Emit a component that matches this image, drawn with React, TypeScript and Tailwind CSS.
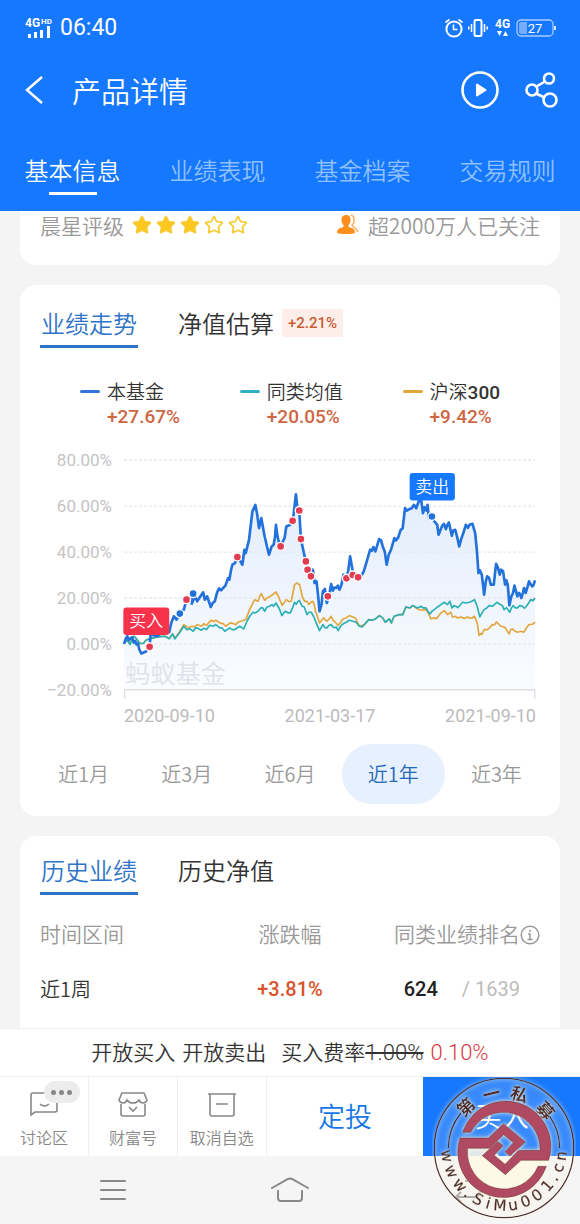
import { Star } from 'lucide-react';

const tabs = ['基本信息', '业绩表现', '基金档案', '交易规则'];

const legend = [
  { name: '本基金', value: '+27.67%', color: 'bg-[#2f74d8]' },
  { name: '同类均值', value: '+20.05%', color: 'bg-[#2fb0c9]' },
  { name: '沪深', num: '300', value: '+9.42%', color: 'bg-[#e0a63a]' },
];

const axis = ['80.00%', '60.00%', '40.00%', '20.00%', '0.00%', '−20.00%'];
const ranges = ['近1月', '近3月', '近6月', '近1年', '近3年'];

// Chart series, x 0..1236 and y 30..720
const fund =
  '0,583 5,568 10,560 15,572 20,566 24,563 30,580 34,574 38,585 42,582 46,600 52,612 66,606 77,592 80,555 100,560 120,545 136,548 142,520 150,500 158,510 168,490 180,480 188,450 200,443 208,432 204,462 213,440 220,455 230,440 238,428 243,450 250,440 261,472 267,460 273,455 280,428 286,416 292,422 298,415 305,408 313,385 317,390 322,360 326,345 334,340 341,322 350,335 356,345 362,300 366,310 376,270 386,185 395,165 400,190 406,235 413,205 423,260 430,290 436,315 444,290 450,285 454,262 457,225 462,262 468,285 476,278 483,265 488,230 500,225 508,210 511,185 517,133 522,180 527,182 532,268 541,310 547,335 552,360 562,380 568,360 573,400 579,395 584,440 588,485 594,465 598,425 604,418 610,460 617,435 623,403 628,423 632,414 638,415 643,408 648,420 654,405 660,375 669,385 674,365 680,320 688,365 696,372 704,383 714,378 721,365 730,335 740,300 745,303 750,292 756,305 767,268 773,272 778,290 784,305 790,345 796,315 803,300 813,265 818,272 825,262 832,240 838,236 845,175 851,182 858,178 865,175 872,165 879,175 886,155 892,140 895,160 899,190 904,172 909,182 913,165 917,205 926,205 936,218 942,225 946,255 952,240 957,228 962,222 968,238 973,224 977,218 986,258 990,242 996,240 1002,262 1008,290 1014,268 1022,245 1028,225 1034,234 1040,224 1048,222 1056,250 1061,300 1066,370 1070,362 1076,375 1083,435 1088,395 1092,380 1098,385 1103,405 1112,405 1119,342 1124,352 1130,375 1134,360 1140,365 1146,405 1150,392 1154,405 1159,467 1165,440 1170,430 1174,408 1179,425 1183,440 1188,430 1192,436 1195,445 1200,428 1203,415 1208,430 1214,410 1218,395 1223,404 1228,410 1232,405 1236,392';

const peers =
  '0,583 8,570 18,585 24,572 30,560 38,568 48,582 58,582 66,572 76,568 100,562 123,560 136,568 146,553 153,568 168,548 180,530 188,540 198,538 208,545 215,535 220,535 233,542 240,536 248,540 258,527 268,530 276,525 288,535 295,535 303,545 318,535 325,540 333,540 348,530 360,538 370,515 378,500 388,488 393,490 398,488 403,485 411,475 417,475 423,485 430,472 438,470 445,465 450,470 457,460 466,475 475,498 482,488 486,485 494,490 500,490 507,475 513,458 518,464 523,455 527,452 536,470 542,472 550,495 556,488 563,488 570,500 578,520 588,543 598,525 604,534 610,535 616,528 623,525 628,532 633,535 638,532 644,543 650,532 656,525 668,518 678,512 688,515 698,518 708,530 716,532 723,525 736,510 746,512 756,508 768,498 778,505 786,518 798,508 804,520 812,500 828,495 838,495 848,472 860,475 868,468 883,475 893,470 900,475 908,475 914,485 920,493 928,483 933,480 943,472 953,465 963,458 973,465 980,455 986,475 992,468 998,470 1004,474 1008,470 1018,458 1028,460 1038,458 1046,455 1054,450 1062,470 1070,502 1077,490 1083,480 1090,476 1098,468 1108,470 1121,458 1130,464 1138,468 1143,480 1150,474 1160,488 1165,475 1170,468 1177,475 1183,475 1190,468 1198,470 1204,476 1210,470 1217,460 1223,450 1230,453 1236,445';

const index =
  '0,583 8,568 18,583 24,570 30,560 38,568 48,582 58,582 66,572 76,568 100,562 123,560 136,566 146,553 153,566 168,545 180,525 193,535 203,530 212,532 220,525 233,530 240,522 248,528 256,518 263,512 270,516 276,512 288,520 298,522 306,530 316,522 323,520 336,525 345,516 353,515 366,510 378,480 385,465 393,450 403,455 408,440 413,432 418,442 423,452 430,445 440,440 446,436 457,427 464,440 468,450 476,467 488,450 496,456 503,455 508,430 513,405 520,400 528,405 536,440 543,455 550,455 556,465 562,458 568,455 572,465 576,485 588,520 600,505 610,515 617,508 623,500 628,512 633,515 644,528 652,518 658,508 668,505 678,498 688,502 696,505 708,530 723,525 736,510 746,512 756,508 768,498 778,505 786,518 798,508 804,520 812,500 828,495 838,495 848,472 860,475 868,468 883,478 893,482 906,480 912,485 923,508 932,505 940,507 953,490 963,483 973,495 983,488 988,503 996,500 1003,505 1013,502 1023,507 1033,502 1038,505 1046,506 1054,500 1062,520 1068,558 1073,552 1076,555 1083,540 1093,540 1102,532 1108,525 1114,526 1120,517 1133,530 1143,532 1150,540 1158,553 1163,540 1168,538 1176,545 1183,548 1193,545 1203,548 1210,535 1218,525 1228,524 1236,518';

const buys = [[77, 592], [188, 450], [341, 322], [471, 290], [507, 213], [527, 182], [532, 268], [547, 335], [552, 360], [562, 380], [613, 440], [669, 386], [688, 376], [704, 383]];
const sells = [[168, 492], [208, 432], [926, 200]];

// Seal characters with their angle on the ring
const sealTop: [string, number][] = [['第', -43], ['一', -13], ['私', 16], ['募', 48]];
const sealUrl: [string, number][] = [
  ['w', 82], ['w', 66], ['w', 50], ['.', 39], ['S', 27], ['i', 16], ['M', 4],
  ['u', -9], ['0', -22], ['0', -35], ['1', -49], ['.', -59], ['c', -70], ['n', -82],
];

function StatusBar() {
  return (
    <div className="flex items-center justify-between px-6 pt-3 font-[Roboto,sans-serif]">
      <div className="flex items-center gap-2">
        <svg className="h-8 w-7" viewBox="0 -5 28 32" fill="#fff">
          <text x="1" y="10" fontSize="12" fontWeight="700">4G</text>
          <text x="17" y="7" fontSize="8" fontWeight="700">HD</text>
          <path d="M4 17h3v4H4zM10 15h3v6h-3zM16 13h3v8h-3zM23 9h3v12h-3z" />
        </svg>
        <span className="text-[23px] leading-8">06:40</span>
      </div>
      <div className="flex items-center gap-1">
        <svg className="h-5 w-5" viewBox="0 0 20 20" fill="none" stroke="#fff" strokeWidth="2">
          <circle cx="10" cy="11" r="7.6" />
          <path d="M9.500 6.500v5h4M1.500 4.500l4-3M18.500 4.500l-4-3" strokeWidth="1.600" />
        </svg>
        <svg className="h-5 w-5" viewBox="0 0 20 20" fill="none" stroke="#fff" strokeWidth="2">
          <rect x="6.500" y="2" width="7" height="16" rx="1.500" />
          <path d="M3.500 6v8M.800 8.500v3M16.500 6v8M19.200 8.500v3" strokeWidth="1.500" />
        </svg>
        <svg className="h-7 w-5" viewBox="0 -4 20 28" fill="#fff">
          <text x="3" y="10" fontSize="12" fontWeight="700">4G</text>
          <path d="M5 13h5l-2.500 5zM11 18h5l-2.500-5z" />
        </svg>
        <svg className="h-5 w-10" viewBox="0 0 40 20" fill="none">
          <rect x="1" y="2" width="36" height="16" rx="4" stroke="#a9cdff" strokeWidth="1.300" />
          <path d="M5 4h6v12H5a2 2 0 0 1-2-2V6a2 2 0 0 1 2-2z" fill="#74adff" />
          <path d="M39 8v4" stroke="#fff" strokeWidth="1.600" />
          <text x="19" y="15" textAnchor="middle" fontSize="13" fill="#fff">27</text>
        </svg>
      </div>
    </div>
  );
}

function Header() {
  return (
    <header className="shrink-0 bg-[#1677ff] pb-4 text-white">
      <StatusBar />
      <div className="flex h-20 items-center px-6 pt-3">
        <button aria-label="返回" className="mr-7">
          <svg className="h-8 w-5" viewBox="0 0 20 32" fill="none" stroke="#fff" strokeWidth="2.500">
            <path d="M18 3L3 16l15 13" />
          </svg>
        </button>
        <h1 className="flex-1 text-[29px] leading-10 font-[350]">产品详情</h1>
        <button aria-label="播放" className="mr-6">
          <svg className="size-10" viewBox="0 0 40 40" fill="none" stroke="#fff" strokeWidth="2.600">
            <circle cx="20" cy="20" r="17.500" />
            <path d="M17 14.500v11l8.500-5.500z" fill="#fff" strokeWidth="2" strokeLinejoin="round" />
          </svg>
        </button>
        <button aria-label="分享" className="-mr-1">
          <svg className="size-9" viewBox="0 0 36 36" fill="none" stroke="#fff" strokeWidth="2.600">
            <circle cx="8" cy="18" r="5.500" />
            <circle cx="25" cy="6.500" r="5" />
            <circle cx="26" cy="28" r="6.500" />
            <path d="M12.500 14.500L21 9.500M12 21.500l8.500 4" />
          </svg>
        </button>
      </div>
      <nav className="grid grid-cols-4 pt-7">
        {tabs.map((tab, i) => (
          <a
            key={tab}
            href="#"
            className={`flex flex-col items-center gap-1 text-2xl leading-9 font-[350] ${i === 0 ? '' : 'text-[#8fc0ff]'}`}
          >
            {tab}
            {i === 0 && <span className="h-[3px] w-12 bg-white" />}
          </a>
        ))}
      </nav>
    </header>
  );
}

function CardTabs({ active, other, badge }: { active: string; other: string; badge?: string }) {
  return (
    <div className="flex items-start px-5 text-2xl font-[350]">
      <button className="border-b-3 border-[#2f74c8] px-px pb-1 leading-9 text-[#2f74c8]">{active}</button>
      <button className="ml-10 leading-9 text-[#333]">{other}</button>
      {badge && (
        <span className="mt-1 ml-2 bg-[#fdeeea] px-1.5 font-[Roboto,sans-serif] text-[15px] leading-7 font-medium text-[#c65d35]">
          {badge}
        </span>
      )}
    </div>
  );
}

function Chart() {
  return (
    <div className="flex pr-4 pl-6 font-[Roboto,'Noto_Sans_CJK_SC',sans-serif] text-[17px] text-[#c4c4c4]">
      <ul className="w-17 shrink-0 text-right">
        {axis.map((label) => (
          <li key={label} className="h-[46px] leading-6">{label}</li>
        ))}
      </ul>
      <div className="ml-2 min-w-0 flex-1">
        <svg className="w-full" viewBox="-4 -12 425 255">
          <defs>
            <linearGradient id="area" x1="0" y1="0" x2="0" y2="1">
              <stop offset="0" stopColor="#e3edfc" />
              <stop offset="1" stopColor="#fafcff" />
            </linearGradient>
          </defs>
          <g transform="scale(.33333) translate(0 -30)" fill="none" strokeWidth="5" strokeLinejoin="round">
            <polygon points={`0,720 ${fund} 1236,720`} fill="url(#area)" />
            {[30, 169, 307, 445, 583].map((y) => (
              <path key={y} d={`M0 ${y}H1236`} stroke="#e6e8ec" strokeWidth="4" strokeDasharray="9 6" />
            ))}
            <text x="3" y="702" fontSize="76" fontWeight="350" fill="#dfe2e8">蚂蚁基金</text>
            <path d="M2 748V721H1235V748" stroke="#dddfe3" strokeWidth="4" />
            <polyline points={index} stroke="#e2a63f" />
            <polyline points={peers} stroke="#2bafb5" />
            <polyline points={fund} stroke="#2372dc" strokeWidth="8" />
            {buys.map(([x, y]) => (
              <circle key={`${x}-${y}`} cx={x} cy={y} r="12" fill="#e23c50" stroke="#fff" strokeWidth="4" />
            ))}
            {sells.map(([x, y]) => (
              <circle key={`${x}-${y}`} cx={x} cy={y} r="12" fill="#2372dc" stroke="#fff" strokeWidth="4" />
            ))}
            <rect x="-2" y="474" width="138" height="82" rx="9" fill="#f7324b" />
            <text x="67" y="533" textAnchor="middle" fontSize="51" fontWeight="350" fill="#fff">买入</text>
            <rect x="859" y="69" width="136" height="83" rx="9" fill="#1677ff" />
            <text x="927" y="129" textAnchor="middle" fontSize="51" fontWeight="350" fill="#fff">卖出</text>
          </g>
        </svg>
        <div className="flex justify-between pr-2 pl-1 text-lg leading-7 text-[#bbb]">
          <span>2020-09-10</span>
          <span>2021-03-17</span>
          <span>2021-09-10</span>
        </div>
      </div>
    </div>
  );
}

function Seal() {
  return (
    <svg className="pointer-events-none absolute right-1 bottom-1 size-[144px]" viewBox="65 49 432 432">
      <defs>
        <filter id="glow" x="-20%" y="-20%" width="140%" height="140%">
          <feDropShadow dx="0" dy="0" stdDeviation="6" floodColor="#fff6dc" floodOpacity="1" />
        </filter>
      </defs>
      <circle cx="281" cy="265" r="209" fill="#fff8e6" fillOpacity="0.15" />
      <path d="M149 262H236L281 300L325 302H414A134 134 0 0 1 149 262Z" fill="#fff8e8" fillOpacity="0.85" />
      <g filter="url(#glow)">
        <circle cx="281" cy="265" r="209" fill="none" stroke="#4a2e35" strokeWidth="4" />
        <path d="M114 265A167 167 0 0 1 152 160M448 265A167 167 0 0 0 418 170" fill="none" stroke="#4a2e35" strokeWidth="4" />
        <g fill="#4f2a2c" textAnchor="middle">
          {sealTop.map(([ch, a]) => (
            <text key={ch} x="281" y="117" fontSize="52" fontWeight="700" transform={`rotate(${a} 281 265)`}>{ch}</text>
          ))}
          {sealUrl.map(([ch, a], i) => (
            <text
              key={i}
              x="281"
              y="453"
              fontSize="46"
              fontWeight="400"
              fontFamily="DejaVu Sans"
              stroke="#4f2a2c"
              strokeWidth="1"
              transform={`rotate(${a} 281 265)`}
            >
              {ch}
            </text>
          ))}
        </g>
      </g>
      <g filter="url(#glow)" fill="#b04a62" stroke="#6f2f3d" strokeWidth="2">
        <path d="M157 218A134 134 0 0 1 415 302H332L285 345L216 288L262 245L278 258L252 287L284 314L325 272H389A110 110 0 0 0 181 218Z" />
        <path d="M408 320A134 134 0 0 1 149 235H234L280 192L345 247L299 289L284 276L309 249L280 225L238 266H172A110 110 0 0 0 383 320Z" />
      </g>
    </svg>
  );
}

function Footer() {
  return (
    <footer className="relative shrink-0 font-[350]">
      <div className="flex h-12 items-center justify-center border-t border-[#eee] bg-white text-[21px] text-[#333]">
        <div className="flex items-baseline gap-[7px]">
          <span>开放买入</span>
          <span>开放卖出</span>
          <span className="ml-2">
            买入费率<s className="font-[Roboto,sans-serif] text-[22px] font-light">1.00%</s>
          </span>
          <span className="font-[Roboto,sans-serif] text-[22px] font-light text-[#d9363e]">0.10%</span>
        </div>
      </div>
      <div className="flex h-20 border-t border-[#eee] bg-white text-[#888]">
        <div className="grid w-[46%] grid-cols-3 text-base leading-6">
          <button className="relative flex flex-col items-center gap-1 border-r border-[#eee] pt-3">
            <svg className="h-8 w-8" viewBox="0 0 32 32" fill="none" stroke="#888" strokeWidth="1.600">
              <path d="M18 4H5a2 2 0 0 0-2 2v20l4-3h20a2 2 0 0 0 2-2v-7M12 15q4.500 4 9 0" />
            </svg>
            讨论区
            <span className="absolute top-1 right-2 flex h-[22px] w-9 items-center justify-center gap-[3px] rounded-full bg-[#ececec]">
              <i className="size-[5px] rounded-full bg-[#888]" />
              <i className="size-[5px] rounded-full bg-[#888]" />
              <i className="size-[5px] rounded-full bg-[#888]" />
            </span>
          </button>
          <button className="flex flex-col items-center gap-1 border-r border-[#eee] pt-3">
            <svg className="h-8 w-8" viewBox="0 0 32 32" fill="none" stroke="#888" strokeWidth="1.600">
              <path d="M5 4h22l3 7q-1 3-4 3t-4-3q-2 3-6 3t-6-3q-1 3-4 3t-4-3zM4 15v10a2 2 0 0 0 2 2h20a2 2 0 0 0 2-2V15M12 18l4 4 4-4" />
            </svg>
            财富号
          </button>
          <button className="flex flex-col items-center gap-1 border-r border-[#eee] pt-3">
            <svg className="h-8 w-8" viewBox="0 0 32 32" fill="none" stroke="#888" strokeWidth="1.600">
              <path d="M2 5h28M4 5v20a2 2 0 0 0 2 2h20a2 2 0 0 0 2-2V5M10 15h12" />
            </svg>
            取消自选
          </button>
        </div>
        <button className="flex-1 text-[27px] text-[#1677e8]">定投</button>
        <button className="w-[27%] bg-[#1677ff] text-[27px] text-white">买入</button>
      </div>
      <div className="grid h-17 grid-cols-3 items-center justify-items-center bg-[#f5f5f5] px-6">
        <button aria-label="菜单">
          <svg className="h-6 w-7" viewBox="0 0 28 24" stroke="#888" strokeWidth="2" strokeLinecap="round">
            <path d="M2 3h24M2 12h24M2 21h24" />
          </svg>
        </button>
        <button aria-label="主页">
          <svg className="h-7 w-10" viewBox="0 0 40 28" fill="none" stroke="#888" strokeWidth="2" strokeLinecap="round">
            <path d="M2 12L18 3q2-1 4 0l16 9M8 15v7q0 3 3 3h18q3 0 3-3v-7" />
          </svg>
        </button>
        <button aria-label="后退">
          <svg className="h-6 w-8" viewBox="0 0 32 24" fill="none" stroke="#999" strokeWidth="2">
            <path d="M14 3h10q5 0 5 8t-5 8H6M10 14l-5 5 5 5" />
          </svg>
        </button>
      </div>
      <Seal />
    </footer>
  );
}

export default function App() {
  return (
    <div className="flex h-screen flex-col overflow-hidden bg-[#f4f4f4] font-['Noto_Sans_CJK_SC',sans-serif]">
      <Header />
      <main className="min-h-0 flex-1 space-y-5 overflow-hidden px-5">
        {/* Rating */}
        <section className="flex items-start justify-between rounded-b-2xl bg-white px-5 pb-[26px] text-[21px] leading-7 font-[350] text-[#999]">
          <div className="flex items-center">
            晨星评级
            <span className="ml-2 flex gap-1">
              {[0, 1, 2, 3, 4].map((i) => (
                <Star key={i} size={20} strokeWidth={2} color="#f8c92c" fill={i < 3 ? '#ffc81e' : 'none'} />
              ))}
            </span>
          </div>
          <div className="flex items-center gap-2">
            <svg className="size-6" viewBox="0 0 24 24" fill="#ff8e1c">
              <path d="M10 2c3.500 0 5 2.500 4.600 5.500-.300 2.300-1 3.500-2 4.500v2c4 1 6.400 2 6.400 5.500 0 2-18 2-18 0C1 16 4 15 7.500 14v-2c-1-1-1.700-2.200-2-4.500C5 4.500 6.500 2 10 2z" />
              <path d="M15 2c4 1 4 8 1 10 0 2 5 3 6 7" fill="none" stroke="#ffae5c" strokeWidth="1.500" />
            </svg>
            超2000万人已关注
          </div>
        </section>

        {/* Performance chart */}
        <section className="rounded-2xl bg-white pt-5 pb-3">
          <CardTabs active="业绩走势" other="净值估算" badge="+2.21%" />
          <div className="flex justify-between px-15 pt-[30px] pb-[18px] text-[19px] leading-[26px] text-[#333]">
            {legend.map((item) => (
              <div key={item.name} className="flex gap-[7px]">
                <i className={`mt-3 h-[3px] w-5 rounded-full ${item.color}`} />
                <div>
                  <p className="h-[26px] font-[350]">
                    {item.name}
                    {item.num && <span className="font-[Roboto,sans-serif] font-medium">{item.num}</span>}
                  </p>
                  <p className="h-[26px] font-[Roboto,sans-serif] font-medium text-[#cf6644]">{item.value}</p>
                </div>
              </div>
            ))}
          </div>
          <Chart />
          <div className="mt-3.5 grid grid-cols-5 px-3 text-xl font-[350] text-[#999]">
            {ranges.map((r) => (
              <button
                key={r}
                className={`h-15 rounded-full ${r === '近1年' ? 'bg-[#e6f0fe] text-[#2468b8]' : ''}`}
              >
                {r}
              </button>
            ))}
          </div>
        </section>

        {/* History */}
        <section className="rounded-2xl bg-white pt-4 pb-10">
          <CardTabs active="历史业绩" other="历史净值" />
          <table className="mt-5 w-full table-fixed text-[21px] leading-9">
            <thead className="text-[#999]">
              <tr>
                <th className="pl-5 text-left font-[350]">时间区间</th>
                <th className="font-[350]">涨跌幅</th>
                <th className="pr-5 text-right font-[350] whitespace-nowrap">
                  同类业绩排名
                  <svg className="inline size-5 align-[-3px]" viewBox="0 0 20 20" fill="none" stroke="#999" strokeWidth="1.500">
                    <circle cx="10" cy="10" r="8.800" />
                    <path d="M10 5v2M8 9h2v5.500M7.500 14.500h5" />
                  </svg>
                </th>
              </tr>
            </thead>
            <tbody>
              <tr>
                <td className="pt-5 pl-5 text-xl leading-9 font-[350] text-[#333]">近1周</td>
                <td className="pt-5 text-center font-[Roboto,sans-serif] text-xl leading-9 font-medium text-[#d9532a]">+3.81%</td>
                <td className="pt-5 pr-10 text-right font-[Roboto,sans-serif] text-xl leading-9 whitespace-nowrap text-[#bbb]">
                  <span className="mr-6 font-medium text-[#222]">624</span>/ 1639
                </td>
              </tr>
            </tbody>
          </table>
        </section>
      </main>
      <Footer />
    </div>
  );
}
